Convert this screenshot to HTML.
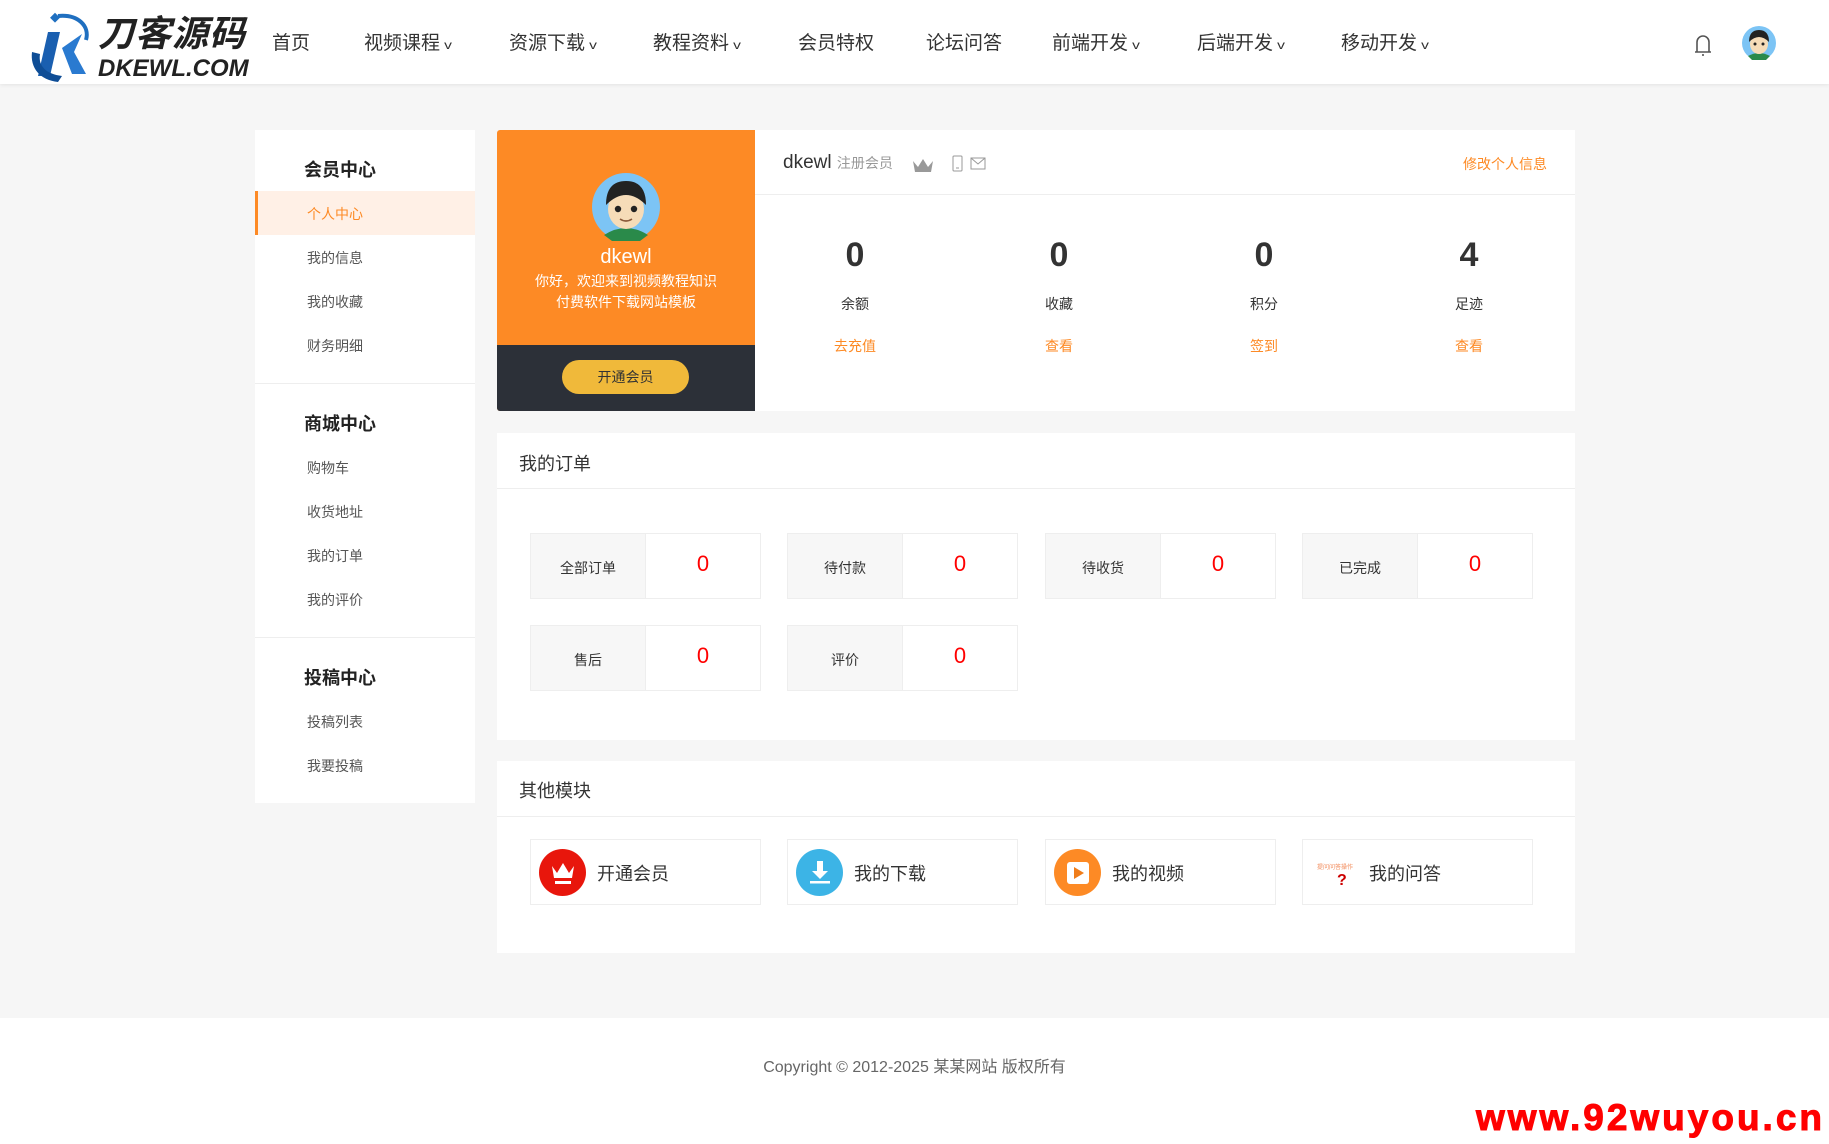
<!DOCTYPE html>
<html><head><meta charset="utf-8"><style>
*{margin:0;padding:0;box-sizing:border-box}
body{width:1829px;height:1144px;background:#f6f6f6;font-family:"Liberation Sans","Noto Sans CJK SC",sans-serif;color:#333;position:relative;overflow:hidden}
.abs{position:absolute}
.hdr{left:0;top:0;width:1829px;height:84px;background:#fff;box-shadow:0 1px 4px rgba(0,0,0,.08)}
.nav{top:28px;font-size:19px;color:#333;white-space:nowrap}
.nav i{font-style:normal;font-size:12px;margin-left:5px;display:inline-block;transform:scaleX(1.3)}
.side{left:255px;top:130px;width:220px;height:673px;background:#fff}
.st{left:49px;font-size:18px;font-weight:bold;color:#222}
.si{left:52px;font-size:14px;color:#555}
.sep{left:0;width:220px;height:1px;background:#eee}
.card{left:497px;top:130px;width:258px;height:281px;background:#fd8a25;border-radius:3px 0 0 3px;overflow:hidden}
.panel{background:#fff}
.num{font-size:34px;font-weight:bold;color:#333;width:120px;text-align:center}
.lbl{font-size:14px;color:#333;width:120px;text-align:center}
.lnk{font-size:14px;color:#fd8a25;width:120px;text-align:center}
.ob{width:231px;height:66px;border:1px solid #eee;background:#fff}
.ob .l{position:absolute;left:0;top:0;width:115px;height:64px;background:#f7f7f7;border-right:1px solid #eee;font-size:14px;text-align:center;line-height:68px;color:#333}
.ob .r{position:absolute;left:115px;top:0;width:114px;height:64px;text-align:center;color:#f00;font-size:22px;line-height:60px}
.mb{width:231px;height:66px;border:1px solid #eee;background:#fff}
.mb .c{position:absolute;left:8px;top:9px;width:47px;height:47px;border-radius:50%}
.mb .t{position:absolute;left:66px;top:20px;font-size:18px;color:#333}
</style></head><body>
<div class="abs hdr"></div>
<svg class="abs" style="left:28px;top:12px" width="70" height="72" viewBox="0 0 70 72">
<path d="M30 4 C50 2 62 14 58 28" stroke="#1f6fc0" stroke-width="4" fill="none"/>
<rect x="24" y="2" width="7" height="7" fill="#1f6fc0" transform="rotate(45 27 5)"/>
<path d="M20 20 L32 20 L22 64 L10 64 Z" fill="#1a5fb0"/>
<path d="M34 36 L54 22 L46 40 L58 62 L44 62 Z" fill="#2a7ad0"/>
<path d="M4 40 C2 56 12 68 30 70 L34 64 C18 62 10 54 12 42 Z" fill="#0e4d96"/>
</svg>
<div class="abs" style="left:98px;top:14px;font-size:36px;font-weight:bold;font-style:italic;color:#222;letter-spacing:1px;line-height:40px">刀客源码</div>
<div class="abs" style="left:98px;top:56px;font-size:24px;font-weight:bold;font-style:italic;color:#222;line-height:26px">DKEWL.COM</div>
<div class="abs nav" style="left:272px">首页</div>
<div class="abs nav" style="left:364px">视频课程<i>v</i></div>
<div class="abs nav" style="left:509px">资源下载<i>v</i></div>
<div class="abs nav" style="left:653px">教程资料<i>v</i></div>
<div class="abs nav" style="left:798px">会员特权</div>
<div class="abs nav" style="left:926px">论坛问答</div>
<div class="abs nav" style="left:1052px">前端开发<i>v</i></div>
<div class="abs nav" style="left:1197px">后端开发<i>v</i></div>
<div class="abs nav" style="left:1341px">移动开发<i>v</i></div>
<svg class="abs" style="left:1692px;top:32px" width="22" height="26" viewBox="0 0 22 26"><path d="M5 20 V10 a6 6 0 0 1 12 0 V20 M3 20 H19 M11 22 v2" stroke="#555" stroke-width="1.6" fill="none"/></svg>
<svg class="abs" style="left:1742px;top:26px" width="34" height="34" viewBox="0 0 34 34"><circle cx="17" cy="17" r="17" fill="#7cc4f5"/><path d="M6 30 Q17 24 28 30 L24 34 H10Z" fill="#2a8a4a"/><ellipse cx="17" cy="18" rx="9" ry="10" fill="#f6dcb8"/><path d="M7 16 Q7 4 17 4 Q27 4 27 16 Q22 11 17 11 Q12 11 7 16Z" fill="#222"/><circle cx="13" cy="18" r="1.5" fill="#222"/><circle cx="21" cy="18" r="1.5" fill="#222"/></svg>

<div class="abs side">
 <div class="abs st" style="top:26px">会员中心</div>
 <div class="abs" style="left:0;top:61px;width:220px;height:44px;background:#fff0e6;border-left:3px solid #fd8a25"></div>
 <div class="abs si" style="top:74px;color:#fd8a25">个人中心</div>
 <div class="abs si" style="top:118px">我的信息</div>
 <div class="abs si" style="top:162px">我的收藏</div>
 <div class="abs si" style="top:206px">财务明细</div>
 <div class="abs sep" style="top:253px"></div>
 <div class="abs st" style="top:280px">商城中心</div>
 <div class="abs si" style="top:328px">购物车</div>
 <div class="abs si" style="top:372px">收货地址</div>
 <div class="abs si" style="top:416px">我的订单</div>
 <div class="abs si" style="top:460px">我的评价</div>
 <div class="abs sep" style="top:507px"></div>
 <div class="abs st" style="top:534px">投稿中心</div>
 <div class="abs si" style="top:582px">投稿列表</div>
 <div class="abs si" style="top:626px">我要投稿</div>
</div>

<div class="abs card">
 <svg class="abs" style="left:95px;top:43px" width="68" height="68" viewBox="0 0 34 34"><circle cx="17" cy="17" r="17" fill="#7cc4f5"/><path d="M6 31 Q17 24 28 31 L24 34 H10Z" fill="#2a8a4a"/><ellipse cx="17" cy="18" rx="9" ry="10" fill="#f6dcb8"/><path d="M7 16 Q7 4 17 4 Q27 4 27 16 Q22 11 17 11 Q12 11 7 16Z" fill="#222"/><circle cx="13" cy="18" r="1.6" fill="#222"/><circle cx="21" cy="18" r="1.6" fill="#222"/><path d="M14 23 Q17 25 20 23" stroke="#8a5a3a" stroke-width=".8" fill="none"/></svg>
 <div class="abs" style="left:0;top:116px;width:258px;text-align:center;color:#fff;font-size:20px">dkewl</div>
 <div class="abs" style="left:0;top:141px;width:258px;text-align:center;color:#fff;font-size:14px;line-height:21px">你好，欢迎来到视频教程知识<br>付费软件下载网站模板</div>
 <div class="abs" style="left:0;top:215px;width:258px;height:66px;background:#2c3038"></div>
 <div class="abs" style="left:65px;top:230px;width:127px;height:34px;border-radius:17px;background:#f0b93a;color:#333;font-size:14px;text-align:center;line-height:34px">开通会员</div>
</div>

<div class="abs panel" style="left:755px;top:130px;width:820px;height:281px">
 <div class="abs" style="left:28px;top:22px;font-size:19px;color:#333">dkewl <span style="font-size:14px;color:#999">注册会员</span></div>
 <svg class="abs" style="left:157px;top:27px" width="22" height="16" viewBox="0 0 22 16"><path d="M1 4 L6 10 L11 2 L16 10 L21 4 L19 15 H3Z" fill="#999"/></svg>
 <svg class="abs" style="left:197px;top:25px" width="40" height="18" viewBox="0 0 40 18"><rect x="1" y="1" width="9" height="15" rx="1" stroke="#999" fill="none"/><line x1="4" y1="13" x2="7" y2="13" stroke="#999"/><rect x="19" y="3" width="14" height="11" stroke="#999" fill="none"/><path d="M19 3 L26 9 L33 3" stroke="#999" fill="none"/></svg>
 <div class="abs" style="right:28px;top:24px;font-size:14px;color:#fd8a25">修改个人信息</div>
 <div class="abs" style="left:0;top:64px;width:820px;height:1px;background:#eee"></div>
 <div class="abs num" style="left:40px;top:106px">0</div><div class="abs lbl" style="left:40px;top:164px">余额</div><div class="abs lnk" style="left:40px;top:206px">去充值</div>
 <div class="abs num" style="left:244px;top:106px">0</div><div class="abs lbl" style="left:244px;top:164px">收藏</div><div class="abs lnk" style="left:244px;top:206px">查看</div>
 <div class="abs num" style="left:449px;top:106px">0</div><div class="abs lbl" style="left:449px;top:164px">积分</div><div class="abs lnk" style="left:449px;top:206px">签到</div>
 <div class="abs num" style="left:654px;top:106px">4</div><div class="abs lbl" style="left:654px;top:164px">足迹</div><div class="abs lnk" style="left:654px;top:206px">查看</div>
</div>

<div class="abs panel" style="left:497px;top:433px;width:1078px;height:307px">
 <div class="abs" style="left:22px;top:17px;font-size:18px;color:#333">我的订单</div>
 <div class="abs" style="left:0;top:55px;width:1078px;height:1px;background:#eee"></div>
</div>
<div class="abs ob" style="left:530px;top:533px"><div class="l">全部订单</div><div class="r">0</div></div>
<div class="abs ob" style="left:787px;top:533px"><div class="l">待付款</div><div class="r">0</div></div>
<div class="abs ob" style="left:1045px;top:533px"><div class="l">待收货</div><div class="r">0</div></div>
<div class="abs ob" style="left:1302px;top:533px"><div class="l">已完成</div><div class="r">0</div></div>
<div class="abs ob" style="left:530px;top:625px"><div class="l">售后</div><div class="r">0</div></div>
<div class="abs ob" style="left:787px;top:625px"><div class="l">评价</div><div class="r">0</div></div>

<div class="abs panel" style="left:497px;top:761px;width:1078px;height:192px">
 <div class="abs" style="left:22px;top:16px;font-size:18px;color:#333">其他模块</div>
 <div class="abs" style="left:0;top:55px;width:1078px;height:1px;background:#eee"></div>
</div>
<div class="abs mb" style="left:530px;top:839px"><div class="c" style="background:#e8160c"></div>
 <svg class="abs" style="left:18px;top:20px" width="28" height="26" viewBox="0 0 28 26"><path d="M3 6 L8 13 L14 3 L20 13 L25 6 L23 18 H5Z" fill="#fff"/><rect x="6" y="21" width="16" height="3" fill="#fff"/></svg>
 <div class="t">开通会员</div></div>
<div class="abs mb" style="left:787px;top:839px"><div class="c" style="background:#3cb4e6"></div>
 <svg class="abs" style="left:18px;top:18px" width="28" height="28" viewBox="0 0 28 28"><path d="M11 3 H17 V13 H22 L14 21 L6 13 H11Z" fill="#fff"/><rect x="4" y="23" width="20" height="2.5" fill="#fff"/></svg>
 <div class="t">我的下载</div></div>
<div class="abs mb" style="left:1045px;top:839px"><div class="c" style="background:#fd8a25"></div>
 <svg class="abs" style="left:19px;top:20px" width="26" height="26" viewBox="0 0 26 26"><rect x="2" y="2" width="22" height="22" rx="3" fill="#fff"/><path d="M9 7 L19 13 L9 19Z" fill="#f07d1a"/></svg>
 <div class="t">我的视频</div></div>
<div class="abs mb" style="left:1302px;top:839px">
 <div class="abs" style="left:14px;top:22px;font-size:6px;color:#f28a5a">提问问答操作</div>
 <div class="abs" style="left:34px;top:32px;font-size:16px;color:#c00;font-weight:bold">?</div>
 <div class="t">我的问答</div></div>

<div class="abs" style="left:0;top:1018px;width:1829px;height:126px;background:#fff"></div>
<div class="abs" style="left:0;top:1053px;width:1829px;text-align:center;font-size:16px;color:#666">Copyright © 2012-2025 某某网站 版权所有</div>
<div class="abs" style="left:1476px;top:1094px;font-size:37px;font-weight:bold;color:#f00;letter-spacing:3px;line-height:48px;-webkit-text-stroke:1px #f00">www.92wuyou.cn</div>
</body></html>
